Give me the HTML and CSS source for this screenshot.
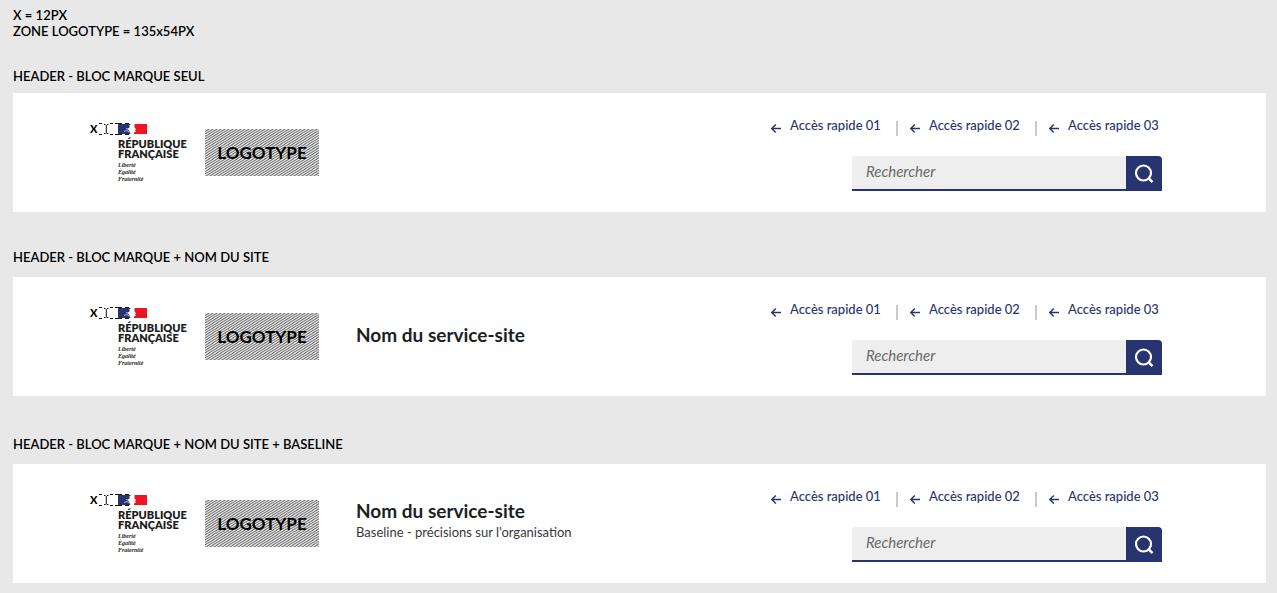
FILE: index.html
```html
<!DOCTYPE html>
<html lang="fr">
<head>
<meta charset="utf-8">
<title>Header</title>
<link rel="stylesheet" href="styles.css">
</head>
<body>
<svg class="defs" aria-hidden="true">
  <defs>
    <pattern id="hatch" width="4" height="2.500" patternUnits="userSpaceOnUse">
      <path d="M-4 5L8 -2.500M-4 2.500L8 -5M-4 7.500L8 0" stroke="#555" stroke-width=".9"/>
    </pattern>
    <symbol id="flag" viewBox="0 0 48 12">
      <path d="M0 .5H3M11 .5H14M16 .5H19M0 11.500H3M11 11.500H14M16 11.500H19" fill="none" stroke="#111"/>
      <path d="M5 1.500H6.500M8 1.500H9.500M7.300 2V10.500M5 10.500H6.500M8 10.500H9.500" fill="none" stroke="#111"/>
      <path d="M19 1H32L30 3L31 4L28.500 6L30 7.500L30.500 9L31.500 11H19Z" fill="#28346f"/>
      <path d="M35.500 1H48V11H35V9.500L37 8.500L36 7L37 6L35.500 4.500Z" fill="#ee1320"/>
      <path d="M25 8.500L28 7.500L30 9M27 5.500L29 6" fill="none" stroke="#aeb3d0"/>
      <path d="M19 .5H33M19 11.500H33" stroke="#111" stroke-dasharray="4 3"/>
    </symbol>
    <symbol id="arrow" viewBox="0 0 10 9">
      <path d="M10 4.500H1M4.800 .5L.8 4.500L4.800 8.500" fill="none" stroke="currentColor" stroke-width="1.400"/>
    </symbol>
    <symbol id="loupe" viewBox="0 0 20 20">
      <circle cx="9.500" cy="9" r="7.500" fill="none" stroke="currentColor" stroke-width="2.200"/>
      <path d="M14.500 14.200L18.500 18.200" stroke="currentColor" stroke-width="2.400"/>
    </symbol>
  </defs>
</svg>
<main class="board">
  <p class="notes">X = 12PX<br>ZONE LOGOTYPE = 135x54PX</p>

  <section class="example">
    <h2 class="label">HEADER - BLOC MARQUE SEUL</h2>
    <header class="header">
      <div class="brand">
        <div class="flag-row"><span class="unit">X</span><svg class="flag"><use href="#flag"/></svg></div>
        <div class="state">RÉPUBLIQUE<br>FRANÇAISE</div>
        <div class="motto">Liberté<br>Égalité<br>Fraternité</div>
      </div>
      <div class="logotype"><svg class="hatch"><rect width="100%" height="100%" fill="url(#hatch)"/></svg><span class="logo-text">LOGOTYPE</span></div>
      <div class="tools">
        <nav class="links">
          <a class="link" href="#"><svg class="arrow"><use href="#arrow"/></svg><span class="link-text">Accès rapide 01</span></a>
          <a class="link" href="#"><svg class="arrow"><use href="#arrow"/></svg><span class="link-text">Accès rapide 02</span></a>
          <a class="link" href="#"><svg class="arrow"><use href="#arrow"/></svg><span class="link-text">Accès rapide 03</span></a>
        </nav>
        <form class="search">
          <input class="field" type="search" placeholder="Rechercher" aria-label="Rechercher">
          <button class="submit" type="button" aria-label="Lancer la recherche"><svg class="loupe"><use href="#loupe"/></svg></button>
        </form>
      </div>
    </header>
  </section>

  <section class="example">
    <h2 class="label">HEADER - BLOC MARQUE + NOM DU SITE</h2>
    <header class="header">
      <div class="brand">
        <div class="flag-row"><span class="unit">X</span><svg class="flag"><use href="#flag"/></svg></div>
        <div class="state">RÉPUBLIQUE<br>FRANÇAISE</div>
        <div class="motto">Liberté<br>Égalité<br>Fraternité</div>
      </div>
      <div class="logotype"><svg class="hatch"><rect width="100%" height="100%" fill="url(#hatch)"/></svg><span class="logo-text">LOGOTYPE</span></div>
      <div class="service"><p class="name">Nom du service-site</p></div>
      <div class="tools">
        <nav class="links">
          <a class="link" href="#"><svg class="arrow"><use href="#arrow"/></svg><span class="link-text">Accès rapide 01</span></a>
          <a class="link" href="#"><svg class="arrow"><use href="#arrow"/></svg><span class="link-text">Accès rapide 02</span></a>
          <a class="link" href="#"><svg class="arrow"><use href="#arrow"/></svg><span class="link-text">Accès rapide 03</span></a>
        </nav>
        <form class="search">
          <input class="field" type="search" placeholder="Rechercher" aria-label="Rechercher">
          <button class="submit" type="button" aria-label="Lancer la recherche"><svg class="loupe"><use href="#loupe"/></svg></button>
        </form>
      </div>
    </header>
  </section>

  <section class="example">
    <h2 class="label">HEADER - BLOC MARQUE + NOM DU SITE + BASELINE</h2>
    <header class="header">
      <div class="brand">
        <div class="flag-row"><span class="unit">X</span><svg class="flag"><use href="#flag"/></svg></div>
        <div class="state">RÉPUBLIQUE<br>FRANÇAISE</div>
        <div class="motto">Liberté<br>Égalité<br>Fraternité</div>
      </div>
      <div class="logotype"><svg class="hatch"><rect width="100%" height="100%" fill="url(#hatch)"/></svg><span class="logo-text">LOGOTYPE</span></div>
      <div class="service service-full"><p class="name">Nom du service-site</p><p class="baseline">Baseline - précisions sur l’organisation</p></div>
      <div class="tools">
        <nav class="links">
          <a class="link" href="#"><svg class="arrow"><use href="#arrow"/></svg><span class="link-text">Accès rapide 01</span></a>
          <a class="link" href="#"><svg class="arrow"><use href="#arrow"/></svg><span class="link-text">Accès rapide 02</span></a>
          <a class="link" href="#"><svg class="arrow"><use href="#arrow"/></svg><span class="link-text">Accès rapide 03</span></a>
        </nav>
        <form class="search">
          <input class="field" type="search" placeholder="Rechercher" aria-label="Rechercher">
          <button class="submit" type="button" aria-label="Lancer la recherche"><svg class="loupe"><use href="#loupe"/></svg></button>
        </form>
      </div>
    </header>
  </section>
</main>
</body>
</html>
```
FILE: styles.css
```css
* { box-sizing: border-box; }
body {
  margin: 0;
  background: #e8e8e8;
  color: #000;
  font-family: Lato, "Open Sans", sans-serif;
}
p, h2 { margin: 0; }
.defs { position: absolute; width: 0; height: 0; }
.board {
  display: flex;
  flex-direction: column;
  padding: 7px 11px 10px 13px;
}
.notes, .label { font-size: 13px; line-height: 16px; font-weight: 600; }
.example { padding-top: 29px; }
.example + .example { padding-top: 37px; }
.example + .example + .example { padding-top: 40px; }
.label { margin-bottom: 9px; }
.example + .example .label { margin-bottom: 12px; }
.header {
  display: flex;
  align-items: flex-start;
  min-height: 119px;
  padding: 24px 104px 20px 77px;
  background: #fff;
}
.brand { flex: none; width: 115px; padding-top: 6px; color: #1e1e1e; }
.flag-row { display: flex; align-items: center; height: 12px; }
.unit { width: 9px; font-size: 11px; line-height: 12px; font-weight: 900; color: #000; }
.flag { flex: none; width: 48px; height: 12px; }
.state {
  padding: 4px 0 0 28px;
  font-size: 11px;
  line-height: 10px;
  font-weight: 800;
}
.motto {
  padding: 3px 0 0 28px;
  font: italic bold 6px/7px "Liberation Serif", serif;
}
.logotype {
  display: grid;
  place-items: center;
  flex: none;
  width: 114px;
  height: 47px;
  margin-top: 12px;
}
.hatch { grid-area: 1 / 1; width: 100%; height: 100%; }
.logo-text { grid-area: 1 / 1; font-size: 17px; line-height: 24px; font-weight: 700; }
.service { margin: 22px 0 0 37px; color: #1e1e1e; }
.service-full { margin-top: 11px; }
.name { font-size: 19px; line-height: 24px; font-weight: 700; }
.baseline { font-size: 13px; line-height: 18px; color: #383838; }
.tools {
  display: flex;
  flex-direction: column;
  align-items: flex-end;
  margin-left: auto;
}
.links { display: flex; height: 20px; margin-bottom: 19px; }
.link {
  display: flex;
  gap: 9px;
  font-size: 13px;
  line-height: 16px;
  font-weight: 500;
  color: #28346f;
  text-decoration: none;
}
.link + .link { margin-left: 12px; }
.link + .link::before {
  content: "";
  width: 2px;
  height: 15px;
  margin: 4px 3px 0 0;
  background: #c9c9c9;
}
.link-text { min-width: 94px; }
.arrow { width: 10px; height: 9px; margin-top: 7px; }
.search { display: flex; width: 310px; height: 35px; }
.field {
  flex: 1;
  min-width: 0;
  padding: 0 14px 4px;
  border: 0;
  border-bottom: 2px solid #28346f;
  border-radius: 4px 0 0 0;
  background: #eee;
  font: italic 15px/20px Lato, sans-serif;
}
.field::placeholder { color: #6a6a6a; opacity: 1; }
.submit {
  display: grid;
  place-items: center;
  width: 36px;
  padding: 0;
  border: 0;
  border-radius: 0 4px 0 0;
  background: #28346f;
  color: #fff;
}
.loupe { width: 20px; height: 20px; }
```
